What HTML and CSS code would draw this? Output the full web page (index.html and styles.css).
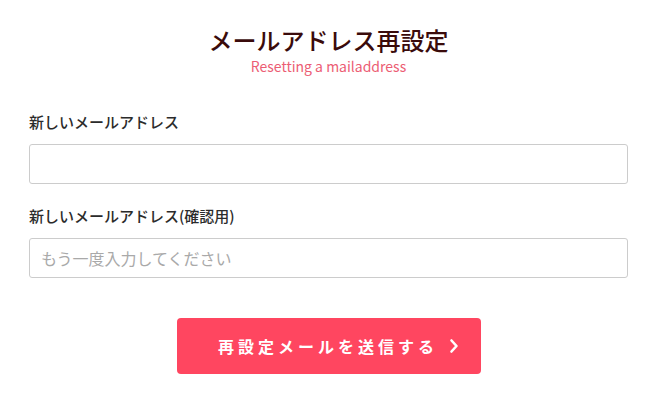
FILE: index.html
```html
<!DOCTYPE html>
<html lang="ja">
<head>
<meta charset="utf-8">
<link rel="stylesheet" href="styles.css">
</head>
<body>
<main class="page">
  <header class="head">
    <h1 class="title">メールアドレス再設定</h1>
    <p class="sub">Resetting a mailaddress</p>
  </header>
  <form class="form">
    <label class="field">
      <span class="label">新しいメールアドレス</span>
      <input class="input" type="email">
    </label>
    <label class="field">
      <span class="label">新しいメールアドレス(確認用)</span>
      <input class="input" type="email" placeholder="もう一度入力してください">
    </label>
    <div class="actions">
      <button class="btn" type="button">
        <span class="btn-text">再設定メールを送信する</span>
        <svg class="chev" width="10" height="16" viewBox="0 0 10 16"><path d="M2.5 2.5 L7.5 8 L2.5 13.5" fill="none" stroke="#fff" stroke-width="2.6" stroke-linecap="round" stroke-linejoin="round"/></svg>
      </button>
    </div>
  </form>
</main>
</body>
</html>
```
FILE: styles.css
```css
* { box-sizing: border-box; }
body {
  margin: 0;
  background: #fff;
  font-family: "Noto Sans CJK JP", "Noto Sans", sans-serif;
  color: #333;
}
.page { padding: 22px 28px 0 29px; }
.head { text-align: center; }
.title {
  margin: 0;
  font-size: 24px;
  line-height: 36px;
  font-weight: 500;
  color: #3a0b0b;
}
.sub {
  margin: 0;
  font-size: 14px;
  line-height: 16px;
  color: #ec5d74;
}
.form { margin-top: 38px; display: flex; flex-direction: column; }
.field { display: flex; flex-direction: column; margin-bottom: 22px; }
.label {
  font-size: 15px;
  line-height: 20px;
  font-weight: 500;
  color: #2b2b2b;
  margin-bottom: 12px;
}
.input {
  height: 40px;
  border: 1px solid #ccc;
  border-radius: 3px;
  padding: 0 11px;
  font-family: inherit;
  font-size: 16px;
  color: #333;
}
.input::placeholder { color: #a9a9a9; }
.actions { display: flex; justify-content: center; margin-top: 18px; }
.btn {
  width: 304px;
  height: 56px;
  background: #ff4660;
  border: none;
  border-radius: 4px;
  display: flex;
  align-items: center;
  justify-content: center;
  gap: 11px;
  color: #fff;
  font-family: inherit;
  font-size: 16px;
  font-weight: 700;
  letter-spacing: 4px;
  padding: 0 0 0 20px;
}
.chev { display: block; }
```
